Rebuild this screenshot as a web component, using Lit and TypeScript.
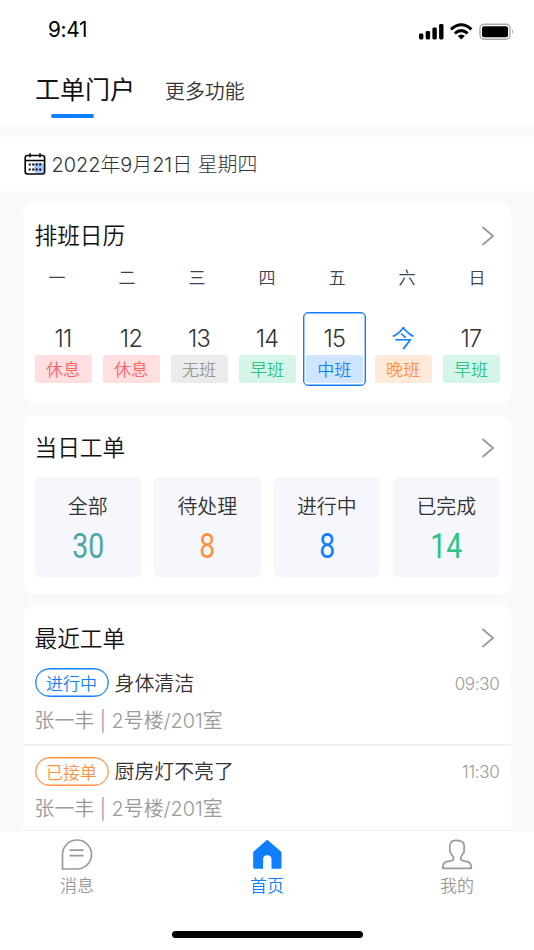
import { LitElement, html, css, svg } from "lit";
import { customElement } from "lit/decorators.js";

const DAYS = [
  ["11", "休息", "rest"],
  ["12", "休息", "rest"],
  ["13", "无班", "none"],
  ["14", "早班", "early"],
  ["15", "中班", "mid"],
  ["今", "晚班", "late"],
  ["17", "早班", "early"],
];
const STATS = [
  ["全部", "30", "teal"],
  ["待处理", "8", "orange"],
  ["进行中", "8", "blue"],
  ["已完成", "14", "green"],
];
const ORDERS = [
  ["进行中", "身体清洁", "09:30", "doing"],
  ["已接单", "厨房灯不亮了", "11:30", "taken"],
];

@customElement("app-root")
export class AppRoot extends LitElement {
  static styles = css`
    :host {
      display: flex;
      flex-direction: column;
      width: 534px;
      height: 950px;
      overflow: hidden;
      box-sizing: border-box;
      background: #f9f9f9;
      color: #333;
      font-family: Inter, "Noto Sans CJK SC", sans-serif;
      font-weight: 350;
      font-size: 19.9px;
      line-height: 28px;
    }
    * { box-sizing: border-box; }
    svg { display: block; flex: none; }
    .top { background: #fff; height: 126px; flex: none; }
    .status {
      height: 58px;
      display: flex;
      justify-content: space-between;
      align-items: center;
      padding: 5px 20px 0 48px;
    }
    .clock { font-size: 20.8px; font-weight: 400; line-height: 26px; letter-spacing: -0.3px; color: #000; margin-top: -4px; }
    .tabs { display: flex; height: 68px; padding-left: 35px; gap: 30px; }
    .tab { padding-top: 19.5px; }
    .tab.on { font-size: 25px; line-height: 36px; color: #111; padding-top: 14px; font-weight: 400; }
    .bar { width: 43px; height: 4px; border-radius: 2px; background: #0f7fff; margin: 6px 0 0 16px; }
    .date {
      flex: none;
      margin: 11px 0 11.7px;
      height: 54px;
      background: #fff;
      display: flex;
      align-items: center;
      padding-left: 23.5px;
      gap: 6px;
      white-space: pre;
    }
    .date span { padding-top: 2px; font-weight: 300; }
    .card { flex: none; background: #fff; border-radius: 11px; margin: 0 23px 11.3px; padding: 0 11.5px; }
    .cal { height: 200.6px; }
    .today { height: 179.6px; }
    .recent { height: 226px; margin-bottom: 0; border-radius: 11px 11px 0 0; padding: 0; }
    .head { display: flex; justify-content: space-between; align-items: center; height: 66px; padding-right: 4.5px; }
    .title { font-size: 22.7px; line-height: 32px; color: #111; padding-top: 1px; }
    .week { display: flex; justify-content: space-between; padding: 0 14px; margin-top: -1px; font-size: 17px; line-height: 20px; color: #3d4155; }
    .days { display: flex; justify-content: space-between; margin-top: 25px; }
    .day { position: relative; width: 57px; display: flex; flex-direction: column; align-items: center; height: 73px; padding-top: 12px; }
    .num { font-size: 23.5px; line-height: 28px; letter-spacing: -0.7px; height: 30px; font-weight: 300; }
    .now { color: #0f7fff; font-weight: 350; letter-spacing: 0; }
    .picked { left: -0.7px; }
    .picked::before {
      content: "";
      position: absolute;
      inset: -1px -3px 0 -3px;
      border: 1.5px solid #0f7fff;
      border-radius: 5px;
      box-shadow: inset 0 0 0 0.4px #0f7fff;
    }
    .shift { width: 57px; height: 28px; border-radius: 3px; font-size: 17px; line-height: 31px; text-align: center; }
    .rest { background: #ffdfdf; color: #ff6363; }
    .none { background: #ebebeb; color: #999; }
    .early { background: #d4f5e7; color: #2fc386; }
    .mid { background: #cfe5ff; color: #0f7fff; }
    .late { background: #ffe9d9; color: #ff9141; }
    .stats { display: grid; grid-template-columns: repeat(4, 106.5px); justify-content: space-between; margin-top: -4px; }
    .stat { height: 100px; border-radius: 5px; background: #f5f7fc; text-align: center; padding-top: 16px; }
    .value { font: 400 35.5px/42px Roboto, sans-serif; transform: scaleX(0.8); margin-top: 4px; }
    .teal { color: #4da6a8; }
    .orange { color: #ff9141; }
    .blue { color: #0f7fff; }
    .green { color: #2bc382; }
    .recent .head { padding: 0 16px 0 11.5px; }
    .order { padding: 10.5px 11.5px 0; height: 86px; border-bottom: 2px solid #f1f1f1; }
    .recent .first { padding-top: 0; height: 78px; margin-top: -3.5px; }
    .line { display: flex; align-items: center; gap: 6px; height: 30px; }
    .line > span:nth-child(2) { padding-top: 2px; }
    .badge { width: 74px; height: 29px; border: 1.5px solid; border-radius: 15px; text-align: center; font-size: 17px; line-height: 30px; box-shadow: inset 0 0 0 0.4px; }
    .doing { color: #0f7fff; }
    .taken { color: #ff9141; }
    .time { margin-left: auto; padding-top: 2px; font-size: 17px; font-weight: 350; color: #999; letter-spacing: -0.3px; }
    .place { color: #999; margin-top: 9px; line-height: 28px; font-weight: 350; }
    .nav { flex: none; height: 119px; background: #fff; display: flex; flex-direction: column; align-items: center; }
    .items { display: flex; width: 100%; height: 67px; justify-content: space-between; padding: 8px 59px 0; }
    .item { width: 36px; display: flex; flex-direction: column; align-items: center; font-size: 17px; line-height: 24px; gap: 3px; color: #999; white-space: nowrap; }
    .item.on { color: #0f7fff; }
    .home { width: 191px; height: 7px; border-radius: 4px; background: #000; margin-top: 33px; }
  `;

  private head(title: string) {
    return html`<div class="head">
      <span class="title">${title}</span>
      <svg width="14" height="20" viewBox="0 0 14 20" fill="none" stroke="#999" stroke-width="1.8"><path d="M1.5 1 12 10 1.5 19" /></svg>
    </div>`;
  }

  render() {
    const dots = [0, 1, 2, 3].map((i) => svg`<path d="M${4.7 + i * 3.5} 11.5h2M${4.7 + i * 3.5} 16.5h2" stroke-width="2" />`);
    return html`
      <div class="top">
        <div class="status">
          <span class="clock">9:41</span>
          <svg width="96" height="18" viewBox="0 0 96 18">
            <rect x="1" y="10.5" width="4.4" height="6" rx="1.4" />
            <rect x="7.7" y="8" width="4.4" height="8.5" rx="1.4" />
            <rect x="14.4" y="4.5" width="4.4" height="12" rx="1.4" />
            <rect x="21.1" y="1" width="4.4" height="15.5" rx="1.4" />
            <g fill="none" stroke="#000" stroke-width="3">
              <path d="M33 6.3Q43.3-2.7 53.4 6.3M36.8 10.4Q43.3 4.8 49.6 10.4" />
            </g>
            <path d="M39.8 13Q43.3 10 46.8 13L43.3 16.5Z" />
            <rect x="62" y="1.3" width="30" height="15" rx="4" fill="none" stroke="#aaa" stroke-width="1.4" />
            <rect x="64" y="3.3" width="26" height="11" rx="2" />
            <path d="M94 6q2 2.5 0 5z" fill="#aaa" />
          </svg>
        </div>
        <div class="tabs">
          <div class="tab on">工单门户<div class="bar"></div></div>
          <div class="tab">更多功能</div>
        </div>
      </div>
      <div class="date">
        <svg width="22" height="22" viewBox="0 0 22 22" fill="none" stroke="#000" stroke-width="1.6">
          <rect x="10" y="9.5" width="10" height="10.5" rx="3" fill="#a4c8fc" stroke="none" />
          <rect x="1.2" y="2.5" width="19.4" height="18.5" rx="2.2" />
          <path d="M1.5 7.5h19M6 .3v4M16 .3v4" />
          ${dots}
        </svg>
        <span>2022年9月21日 星期四</span>
      </div>
      <section class="card cal">
        ${this.head("排班日历")}
        <div class="week">${[..."一二三四五六日"].map((d) => html`<span>${d}</span>`)}</div>
        <div class="days">
          ${DAYS.map(([n, s, c]) => html`<div class="day ${c === "mid" ? "picked" : ""}">
            <div class="num ${n === "今" ? "now" : ""}">${n}</div>
            <div class="shift ${c}">${s}</div>
          </div>`)}
        </div>
      </section>
      <section class="card today">
        ${this.head("当日工单")}
        <div class="stats">
          ${STATS.map(([n, v, c]) => html`<div class="stat">${n}<div class="value ${c}">${v}</div></div>`)}
        </div>
      </section>
      <section class="card recent">
        ${this.head("最近工单")}
        ${ORDERS.map(([s, t, time, c], i) => html`<div class="order ${i === 0 ? "first" : ""}">
          <div class="line"><span class="badge ${c}">${s}</span><span>${t}</span><span class="time">${time}</span></div>
          <div class="place">张一丰 | 2号楼/201室</div>
        </div>`)}
      </section>
      <nav class="nav">
        <div class="items">
          <div class="item">
            <svg width="32" height="32" viewBox="0 0 32 32" fill="none" stroke="#999" stroke-width="1.7"><path d="M1.5 30V15.5A14.5 14.5 0 1 1 16 30ZM8.5 11.2h14M8.5 16.7h14" /></svg>
            消息
          </div>
          <div class="item on">
            <svg width="32" height="32" viewBox="0 0 32 32" fill="#0f7fff"><path d="M15.5 1.2q.7-.6 1.4 0L30.5 13V28.6q0 1.1-1.1 1.1H20.5V20q0-3.8-4.2-3.8T12.1 20V29.7H3.3Q2.2 29.7 2.2 28.6V13Z" /></svg>
            首页
          </div>
          <div class="item">
            <svg width="32" height="32" viewBox="0 0 32 32" fill="none" stroke="#999" stroke-width="1.7" stroke-linejoin="round"><path d="M11.5 1.8Q16.5 .8 21 2.8Q23.3 4 23.2 7L23 11Q23.8 13.3 21.5 15Q20.8 17 19.8 18.2V20Q20.5 21.4 22 21.8L26.5 22.6Q30.3 24 30.3 29.3H1.8Q1.6 24 5.5 22.6L10.5 21.8Q12.3 21.2 12.5 20V18.2Q11 17 10.3 14.8Q8.4 13.5 9 10.5Q8.3 6.5 9.5 4.5Z" /></svg>
            我的
          </div>
        </div>
        <div class="home"></div>
      </nav>
    `;
  }
}
